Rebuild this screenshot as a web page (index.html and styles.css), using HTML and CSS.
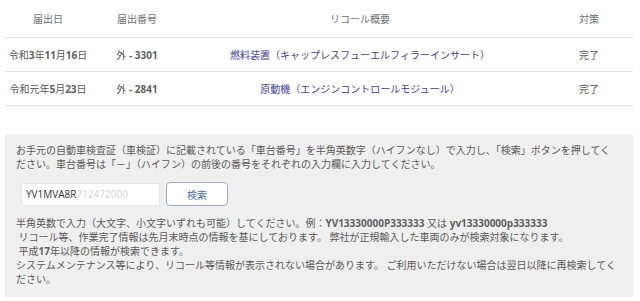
FILE: index.html
```html
<!DOCTYPE html>
<html lang="ja">
<head>
<meta charset="utf-8">
<link rel="stylesheet" href="styles.css">
</head>
<body>
<div class="page">
  <div class="table">
    <div class="row head">
      <div class="c c1">届出日</div>
      <div class="c c2">届出番号</div>
      <div class="c c3">リコール概要</div>
      <div class="c c4">対策</div>
    </div>
    <div class="row">
      <div class="c c1">令和<b>3</b>年<b>11</b>月<b>16</b>日</div>
      <div class="c c2">外 <b>- 3301</b></div>
      <div class="c c3"><a class="link" href="#">燃料装置（キャップレスフューエルフィラーインサート）</a></div>
      <div class="c c4">完了</div>
    </div>
    <div class="row">
      <div class="c c1">令和元年<b>5</b>月<b>23</b>日</div>
      <div class="c c2">外 <b>- 2841</b></div>
      <div class="c c3"><a class="link" href="#">原動機（エンジンコントロールモジュール）</a></div>
      <div class="c c4">完了</div>
    </div>
  </div>

  <div class="box">
    <p class="lead">お手元の自動車検査証（車検証）に記載されている「車台番号」を半角英数字（ハイフンなし）で入力し、「検索」ボタンを押してください。車台番号は「－」（ハイフン）の前後の番号をそれぞれの入力欄に入力してください。</p>
    <div class="form">
      <div class="input"><span class="val">YV1MVA8R</span><span class="blur">712472000</span></div>
      <button class="btn" type="button">検索</button>
    </div>
    <p class="notes">半角英数で入力（大文字、小文字いずれも可能）してください。例：<b>YV13330000P333333</b> 又は <b>yv13330000p333333</b><br>&nbsp;リコール等、作業完了情報は先月末時点の情報を基にしております。 弊社が正規輸入した車両のみが検索対象になります。<br>&nbsp;平成<b>17</b>年以降の情報が検索できます。<br>システムメンテナンス等により、リコール等情報が表示されない場合があります。 ご利用いただけない場合は翌日以降に再検索してください。</p>
  </div>
</div>
</body>
</html>
```

FILE: styles.css
```css
* { box-sizing: border-box; }
html, body { margin: 0; padding: 0; background: #fff; }
body {
  font-family: "Open Sans", "Noto Sans CJK JP", sans-serif;
  font-size: 10px;
  color: #595959;
}
b { font-weight: 700; color: #5f5f5f; }
.page { padding: 0 7px 0 5px; }

.table { width: 628px; }
.row {
  display: grid;
  grid-template-columns: 86px 92px 1fr 88px;
  height: 34px;
  align-items: center;
  border-bottom: 1px solid #e2e2e2;
}
.row.head { height: 38px; color: #707070; }
.c { text-align: center; white-space: nowrap; }
.c3 { padding-right: 8px; }
.link { color: #3f3f9e; text-decoration: none; }

.box {
  width: 628px;
  margin-top: 28px;
  background: #efefef;
  padding: 9px 12px 11px 11px;
  line-height: 14px;
}
.box p { margin: 0; }
.lead { width: 599px; }
.form {
  display: flex;
  align-items: center;
  gap: 6px;
  margin: 11px 0 10px 5px;
}
.input {
  width: 139px;
  height: 23px;
  background: #fff;
  border: 1px solid #e6e6e6;
  padding: 0 4px;
  display: flex;
  align-items: center;
  font-size: 10px;
}
.val { color: #333; }
.blur { color: #d6d6d6; }
.btn {
  width: 62px;
  height: 24px;
  background: #fff;
  border: 1px solid #9aaed0;
  border-radius: 4px;
  color: #4d6aa6;
  font-family: "Noto Sans CJK JP", sans-serif;
  font-size: 10px;
  padding: 0;
}
```
